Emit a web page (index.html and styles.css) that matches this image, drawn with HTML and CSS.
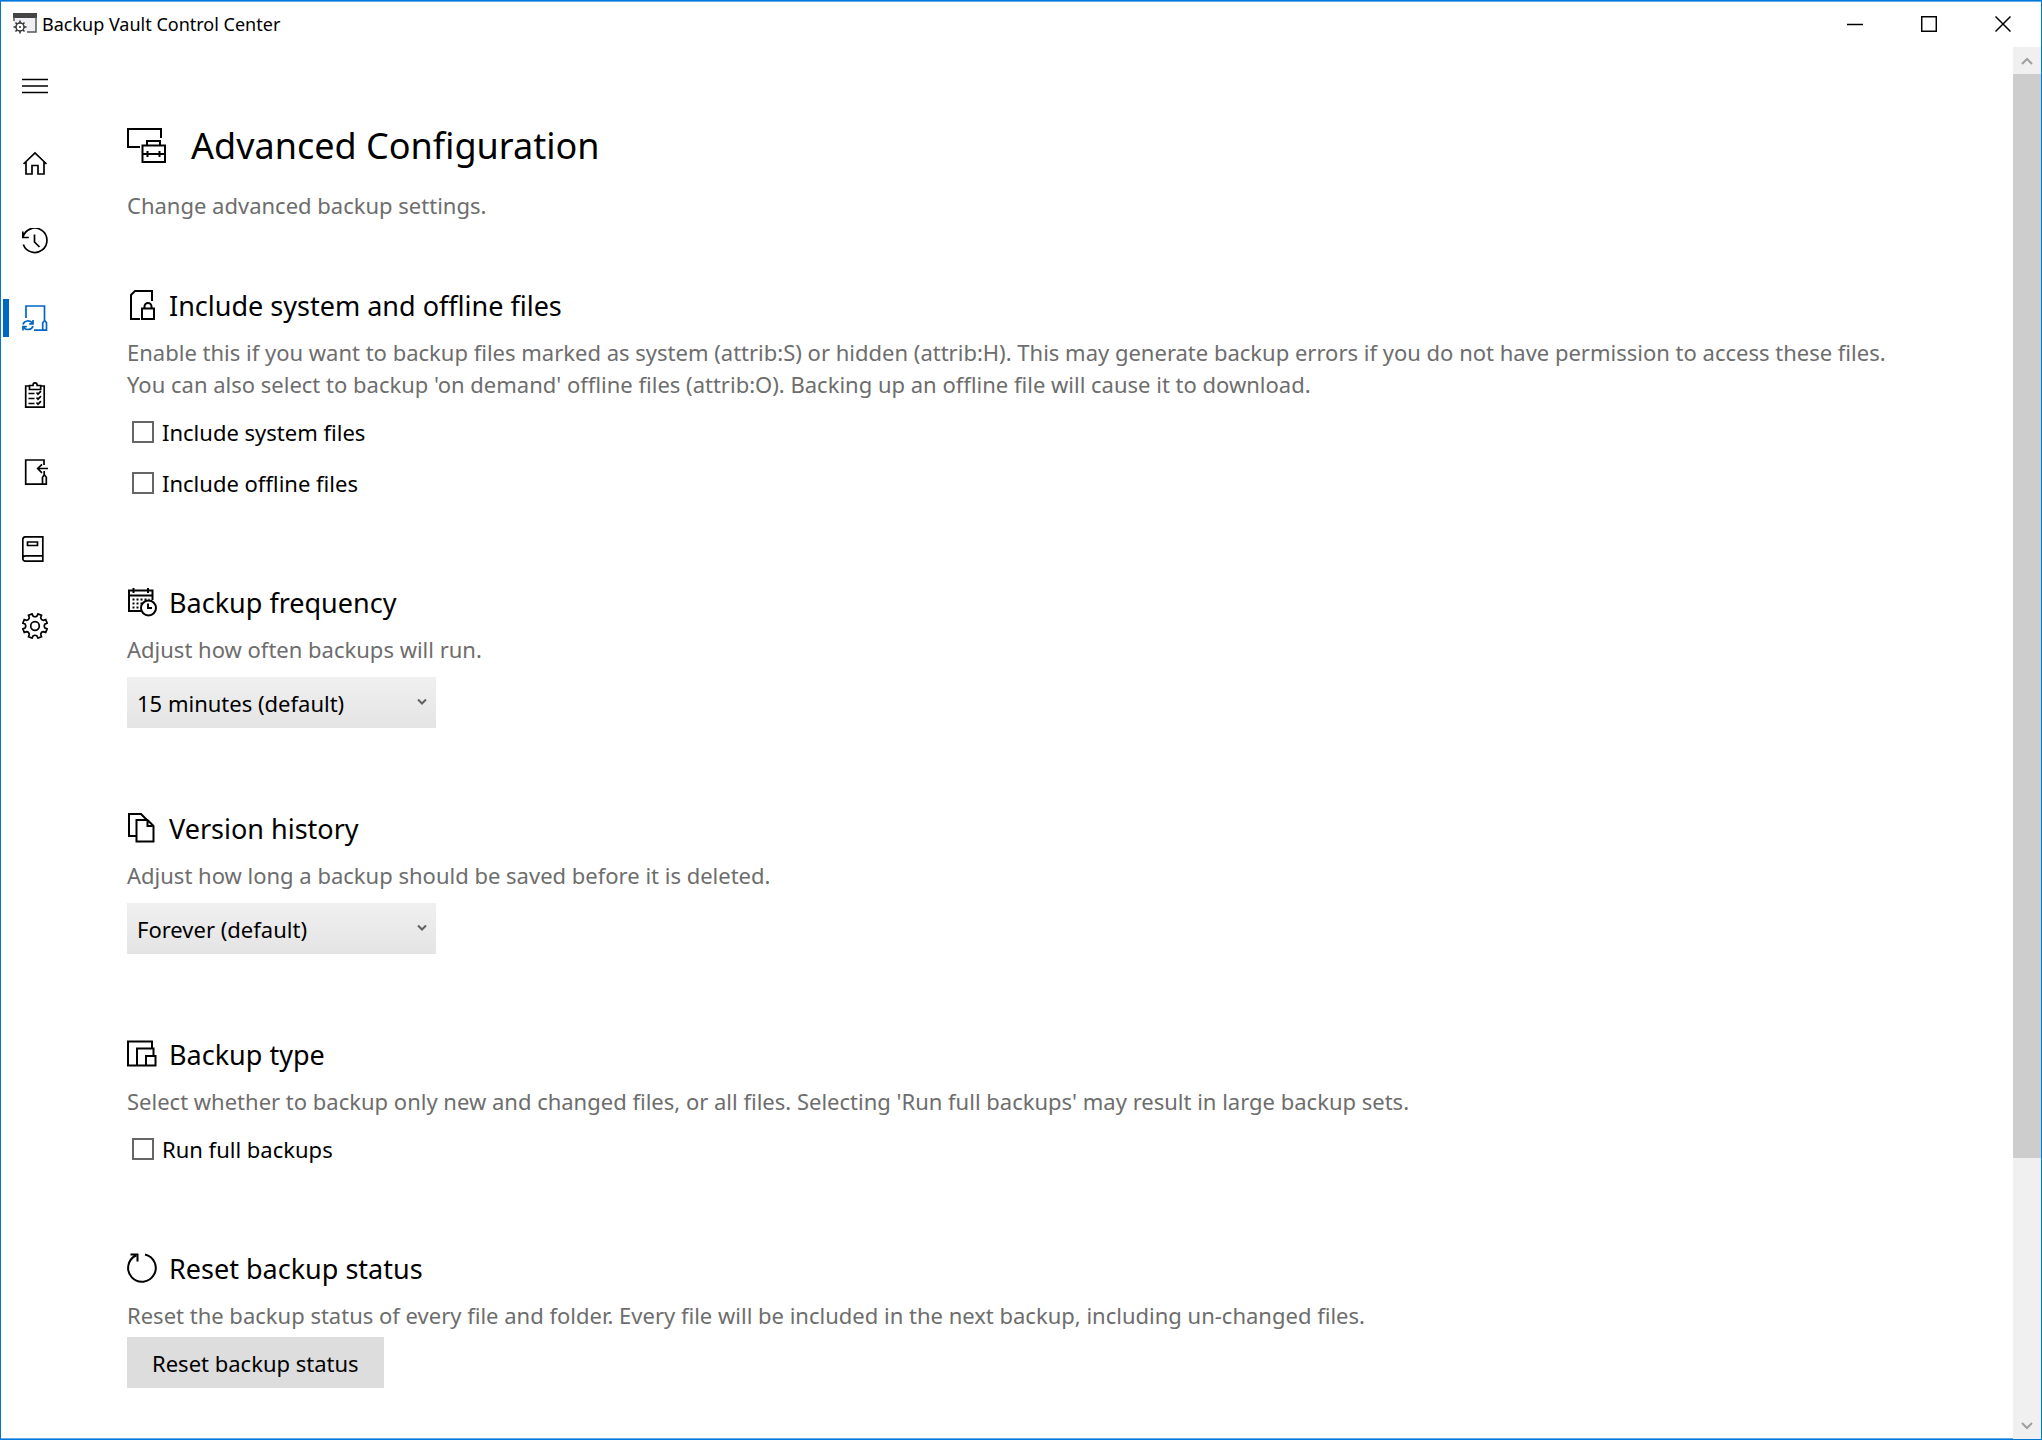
FILE: index.html
```
<!DOCTYPE html>
<html lang="en">
<head>
  <meta charset="UTF-8" />
  <meta name="viewport" content="width=device-width, initial-scale=1.0" />
  <title>Backup Vault Control Center</title>
  <link rel="stylesheet" href="styles.css">
</head>
<body>
  <div class="window">
    <header class="titlebar">
      <svg class="app-icon" width="24" height="22" viewBox="0 0 24 22">
        <path d="M1 1h22v18H1z" fill="#f0f0f4" />
        <path d="M0 0h24v5H0z" fill="#444" />
        <path d="M1 4v4M23 4v15h-9" fill="none" stroke="#555" stroke-width="1.500" />
        <circle cx="7" cy="14" r="4" fill="#fff" stroke="#333" stroke-width="1.500" />
        <circle cx="7" cy="14" r="1" fill="#333" />
        <path d="M7 7.500v2.500M7 18v2.500M.5 14H3M11 14h2.500M2.500 9.500l1.500 1.500M10 17l1.500 1.500M11.500 9.500L10 11M4 17l-1.500 1.500" stroke="#333" stroke-width="1.500" />
      </svg>
      <span class="app-title">Backup Vault Control Center</span>
      <div class="window-buttons">
        <button type="button" aria-label="Minimize">
          <svg width="16" height="16" viewBox="0 0 16 16"><path d="M0 8.500h16" /></svg>
        </button>
        <button type="button" aria-label="Maximize">
          <svg width="16" height="16" viewBox="0 0 16 16"><path d="M.7.7h14.600v14.600H.7z" /></svg>
        </button>
        <button type="button" aria-label="Close">
          <svg width="16" height="16" viewBox="0 0 16 16"><path d="M.5.5l15 15M15.500.5l-15 15" /></svg>
        </button>
      </div>
    </header>

    <div class="body">
      <nav class="sidebar">
        <button type="button" class="nav-item" aria-label="Menu">
          <svg width="26" height="26" viewBox="0 0 26 26"><path d="M0 5.500h26M0 12h26M0 18.500h26" /></svg>
        </button>
        <a href="#home" class="nav-item" aria-label="Home">
          <svg width="26" height="26" viewBox="0 0 26 26"><path d="M1.500 13L13 2l11.500 11M4 11v12h6v-8.500h6v8.500h6v-12" /></svg>
        </a>
        <a href="#history" class="nav-item" aria-label="History">
          <svg width="26" height="26" viewBox="0 0 26 26"><path d="M1 9A12.200 12.200 0 1 1 1.300 16.500M.8 3.500v6h6M12.500 6.500v7.500l5 5" /></svg>
        </a>
        <a href="#backup" class="nav-item active" aria-label="Backup">
          <svg width="26" height="26" viewBox="0 0 26 26"><path d="M4 13V1h18.500v15M12 25.200h9M20.700 25.200v-7.500l1.500-1.700h1l1.300 1.700v7.500zM1 19.500c1-4 7-5 9.500-1.200M11 15v3.800H7.200M11 21c-1 4-7 4.800-9.500 1.200M1 25.500v-3.800h3.800" /></svg>
        </a>
        <a href="#tasks" class="nav-item" aria-label="Tasks">
          <svg width="26" height="26" viewBox="0 0 26 26"><path d="M7.500 4H3.700v21.200h18.500V4h-3.700M7.500 7.500V3.500H11c0-3.500 4.200-3.500 4.200 0h3.500v4zM6.500 11.500h6M6.500 16.500h6M6.500 21.500h6M14.500 10.500l1.500 1.700 3-3M14.500 15.500l1.500 1.700 3-3M14.500 20.500l1.500 1.700 3-3" /></svg>
        </a>
        <a href="#restore" class="nav-item" aria-label="Restore">
          <svg width="26" height="26" viewBox="0 0 26 26"><path d="M22 6V1H3.700v24.200h16.500M26 9.500H15.500M20 5.300L15.700 9.500l4.300 4.300M22.200 12v4M20.500 25.200v-7l1.200-1.700h1.300l1.300 1.700v7z" /></svg>
        </a>
        <a href="#manual" class="nav-item" aria-label="Manual">
          <svg width="26" height="26" viewBox="0 0 26 26"><path d="M20.800 25.200H3.500a2.700 2.700 0 0 1-2.700-2.700V3.500A2.700 2.700 0 0 1 3.500.8h17.300zM.8 22.500a2.700 2.700 0 0 1 2.700-2.700h17.300M5.500 6h10v3.500h-10z" /></svg>
        </a>
        <a href="#settings" class="nav-item" aria-label="Settings">
          <svg width="26" height="26" viewBox="0 0 26 26"><circle cx="13" cy="13" r="4.300" /><path d="M15 3L15.900.9 19.500 2.300 18.700 4.500Q19 7 21.500 7.300L23.700 6.500 25.100 10.100 23 11Q21.500 13 23 15L25.100 15.900 23.700 19.500 21.500 18.700Q19 19 18.700 21.500L19.500 23.700 15.900 25.100 15 23Q13 21.500 11 23L10.100 25.100 6.500 23.700 7.300 21.500Q7 19 4.500 18.700L2.300 19.500.9 15.900 3 15Q4.500 13 3 11L.9 10.100 2.300 6.500 4.500 7.300Q7 7 7.300 4.500L6.500 2.300 10.100.9 11 3Q13 4.500 15 3z" /></svg>
        </a>
      </nav>

      <main class="content">
        <div class="page-title">
          <svg width="40" height="36" viewBox="0 0 40 36"><path d="M13 19H1V1h33v9M15.500 17.500H38V34H15.500zM20 17v-4h13v4M15.500 26H38M20.500 23v6M32.500 23v6" /></svg>
          <h1>Advanced Configuration</h1>
        </div>
        <p class="subtitle">Change advanced backup settings.</p>

        <section>
          <div class="section-title">
            <svg width="30" height="30" viewBox="0 0 30 30"><path d="M13 29H4V5l4-4h17v10M15 18.500h12V29H15zM17.500 18v-1.500a3.500 3.500 0 0 1 7 0V18" /></svg>
            <h2>Include system and offline files</h2>
          </div>
          <p>Enable this if you want to backup files marked as system (attrib:S) or hidden (attrib:H). This may generate backup errors if you do not have permission to access these files.<br>You can also select to backup 'on demand' offline files (attrib:O). Backing up an offline file will cause it to download.</p>
          <label class="check"><input type="checkbox" />Include system files</label>
          <label class="check"><input type="checkbox" />Include offline files</label>
        </section>

        <section>
          <div class="section-title">
            <svg width="30" height="30" viewBox="0 0 30 30"><path d="M14 24H2V3.500h23.500V13M2 8.500h23.500M6.500 1v5M21 1v5" /><path d="M5.500 12.500h17M5.500 16.500h11M5.500 20.500h8" stroke-dasharray="2 2" /><circle cx="21.500" cy="21" r="7.500" /><path d="M21 16.500V21h4" /></svg>
            <h2>Backup frequency</h2>
          </div>
          <p><label for="frequency">Adjust how often backups will run.</label></p>
          <div class="dropdown">
            <select id="frequency"><option>15 minutes (default)</option></select>
            <svg width="10" height="8" viewBox="0 0 10 8"><path d="M1 1.500l4 4 4-4" /></svg>
          </div>
        </section>

        <section>
          <div class="section-title">
            <svg width="30" height="30" viewBox="0 0 30 30"><path d="M9.500 23H2V1h12l6 6M9.500 7h11l6 6v15.500h-17zM20.500 7v6h6" /></svg>
            <h2>Version history</h2>
          </div>
          <p><label for="retention">Adjust how long a backup should be saved before it is deleted.</label></p>
          <div class="dropdown">
            <select id="retention"><option>Forever (default)</option></select>
            <svg width="10" height="8" viewBox="0 0 10 8"><path d="M1 1.500l4 4 4-4" /></svg>
          </div>
        </section>

        <section>
          <div class="section-title">
            <svg width="30" height="30" viewBox="0 0 30 30"><path d="M25 9V2.500H1V26.500h27.500V17H19v9.500M10 26.500V9.500h16.500V17" /></svg>
            <h2>Backup type</h2>
          </div>
          <p>Select whether to backup only new and changed files, or all files. Selecting 'Run full backups' may result in large backup sets.</p>
          <label class="check"><input type="checkbox" />Run full backups</label>
        </section>

        <section>
          <div class="section-title">
            <svg width="30" height="30" viewBox="0 0 30 30"><path d="M18 1.500A13.800 13.800 0 1 1 9 2.500M3.500 1.500h7v7" /></svg>
            <h2>Reset backup status</h2>
          </div>
          <p>Reset the backup status of every file and folder. Every file will be included in the next backup, including un-changed files.</p>
          <button type="button" class="action">Reset backup status</button>
        </section>
      </main>

      <div class="scrollbar">
        <button type="button" aria-label="Scroll up">
          <svg width="12" height="10" viewBox="0 0 12 10"><path d="M1 8l5-5 5 5" /></svg>
        </button>
        <div class="track"><div class="thumb"></div></div>
        <button type="button" aria-label="Scroll down">
          <svg width="12" height="10" viewBox="0 0 12 10"><path d="M1 2l5 5 5-5" /></svg>
        </button>
      </div>
    </div>
  </div>
</body>
</html>
```
FILE: styles.css
```
* {
  box-sizing: border-box;
}

body {
  margin: 0;
  font-family: "Segoe UI", "Noto Sans", "Open Sans", sans-serif;
  font-size: 22px;
  line-height: 32px;
  color: #000;
  background: #fff;
}

h1, h2, p {
  margin: 0;
  font-weight: normal;
}

button, select {
  font: inherit;
  color: inherit;
  border: 0;
  border-radius: 0;
}

svg {
  display: block;
  flex: none;
  fill: none;
  stroke: currentColor;
  stroke-width: 2;
}

.window {
  display: flex;
  flex-direction: column;
  min-height: 100vh;
  border: 1px solid #0078d7;
  box-shadow: inset 0 1px #5cabec, inset 0 -1px #5cabec;
}

/* Title bar */
.titlebar {
  display: flex;
  align-items: center;
  height: 46px;
  padding-left: 12px;
}

.app-icon {
  stroke: none;
}

.app-title {
  margin-left: 5px;
  font-size: 18px;
}

.window-buttons {
  display: flex;
  margin: 0 1px 0 auto;
}

.window-buttons button {
  display: flex;
  align-items: center;
  justify-content: center;
  width: 74px;
  height: 44px;
  background: none;
}

.window-buttons svg {
  stroke-width: 1.5;
}

.body {
  display: flex;
  flex: 1;
}

/* Sidebar */
.sidebar {
  display: flex;
  flex-direction: column;
  width: 66px;
  padding-top: 1px;
}

.nav-item {
  display: flex;
  align-items: center;
  height: 77px;
  padding: 0 0 0 21px;
  color: #000;
  background: none;
}

.nav-item svg {
  stroke-width: 1.7;
}

.nav-item.active {
  position: relative;
  color: #0067c5;
}

.nav-item.active::before {
  content: "";
  position: absolute;
  left: 2px;
  width: 6px;
  height: 38px;
  background: #0067c5;
}

/* Settings page */
.content {
  flex: 1;
  padding: 71px 60px 0;
}

.page-title {
  display: flex;
  align-items: center;
  gap: 24px;
}

h1 {
  font-size: 36px;
  line-height: 56px;
}

.subtitle {
  margin: 15px 0 63px;
}

section {
  margin-bottom: 73px;
}

section:last-child {
  margin-bottom: 44px;
}

.section-title {
  display: flex;
  align-items: center;
  gap: 12px;
  margin-bottom: 10px;
}

h2 {
  padding-top: 2px;
  font-size: 27px;
  line-height: 40px;
}

p {
  color: #6d6d6d;
}

.check {
  display: flex;
  align-items: center;
  width: fit-content;
  height: 51px;
}

p + .check {
  margin-top: 6px;
}

.check input {
  appearance: none;
  width: 22px;
  height: 22px;
  margin: 0 8px 0 5px;
  border: 2px solid #666;
  background: #fff;
}

.check input:checked {
  background: #0067c5;
}

.dropdown {
  position: relative;
  width: 309px;
  margin: 12px 0 79px;
}

.dropdown select {
  appearance: none;
  display: block;
  width: 100%;
  height: 51px;
  padding: 0 30px 0 10px;
  background: linear-gradient(#f0f0f0, #e4e4e4);
}

.dropdown svg {
  position: absolute;
  top: 21px;
  right: 9px;
  color: #606060;
  pointer-events: none;
}

.action {
  height: 51px;
  margin-top: 6px;
  padding: 0 25px;
  background: #ddd;
}

/* Scrollbar */
.scrollbar {
  display: flex;
  flex-direction: column;
  width: 28px;
  background: #f0f0f0;
}

.scrollbar button {
  display: flex;
  align-items: center;
  justify-content: center;
  height: 27px;
  padding: 0;
  color: #a0a0a0;
  background: none;
}

.track {
  flex: 1;
}

.thumb {
  height: 81%;
  background: #cdcdcd;
}
```
